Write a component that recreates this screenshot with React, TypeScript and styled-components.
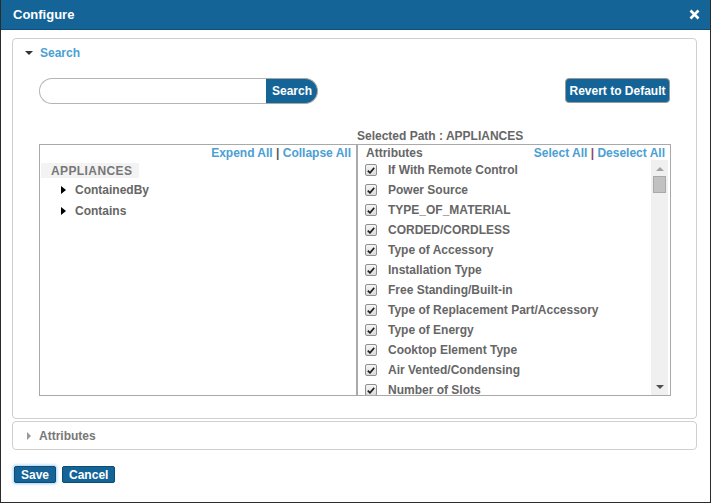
import React, { useState } from 'react';
import styled, { createGlobalStyle } from 'styled-components';

const GlobalStyle = createGlobalStyle`
  html, body {
    margin: 0;
    padding: 0;
    background: #fff;
  }
  body {
    font-family: 'Liberation Sans', Arial, sans-serif;
    font-size: 12px;
    color: #666;
  }
`;

const attributeNames = [
  'If With Remote Control',
  'Power Source',
  'TYPE_OF_MATERIAL',
  'CORDED/CORDLESS',
  'Type of Accessory',
  'Installation Type',
  'Free Standing/Built-in',
  'Type of Replacement Part/Accessory',
  'Type of Energy',
  'Cooktop Element Type',
  'Air Vented/Condensing',
  'Number of Slots',
];

const Dialog = styled.div`
  width: 711px;
  height: 503px;
  box-sizing: border-box;
  border: 1px solid #2b2b2b;
  border-top: none;
  display: flex;
  flex-direction: column;
  background: #fff;
`;

const TitleBar = styled.div`
  height: 30px;
  background: #156498;
  border-bottom: 1px solid #0f4f7a;
  box-sizing: border-box;
  display: flex;
  align-items: center;
  justify-content: space-between;
  padding: 0 10px 0 12px;
  color: #fff;
`;

const Title = styled.span`
  font-weight: bold;
  font-size: 13px;
`;

const CloseIcon = styled.svg`
  width: 11px;
  height: 11px;
  display: block;
`;

const Body = styled.div`
  flex: 1;
  padding: 8px 13px 0 11px;
  display: flex;
  flex-direction: column;
  gap: 2px;
`;

const Panel = styled.div<{ $height: number }>`
  height: ${(p) => p.$height}px;
  box-sizing: border-box;
  border: 1px solid #cfcfcf;
  border-radius: 4px;
  display: flex;
  flex-direction: column;
`;

const PanelHeader = styled.div<{ $open?: boolean }>`
  height: 27px;
  display: flex;
  align-items: center;
  gap: 7px;
  padding-left: 12px;
  font-weight: bold;
  font-size: 12px;
  color: ${(p) => (p.$open ? '#4aa0d3' : '#777')};
`;

const Caret = styled.span<{ $open?: boolean }>`
  width: 0;
  height: 0;
  ${(p) =>
    p.$open
      ? `border-left: 4px solid transparent;
         border-right: 4px solid transparent;
         border-top: 4px solid #333;`
      : `border-top: 4px solid transparent;
         border-bottom: 4px solid transparent;
         border-left: 4px solid #999;
         margin-left: 2px;
         margin-right: 1px;`}
`;

const PanelContent = styled.div`
  padding: 12px 26px 0 26px;
  display: flex;
  flex-direction: column;
`;

const SearchRow = styled.div`
  display: flex;
  justify-content: space-between;
  align-items: flex-start;
`;

const SearchGroup = styled.div`
  display: flex;
  height: 26px;
`;

const SearchInput = styled.input`
  width: 227px;
  height: 26px;
  box-sizing: border-box;
  border: 1px solid #b5b5b5;
  border-right: none;
  border-radius: 13px 0 0 13px;
  padding: 0 10px;
  outline: none;
  font-family: inherit;
`;

const SearchButton = styled.button`
  height: 26px;
  width: 52px;
  box-sizing: border-box;
  border: 1px solid #a8a8a8;
  border-left: none;
  border-radius: 0 13px 13px 0;
  background: #156498;
  color: #fff;
  font-family: inherit;
  font-weight: bold;
  font-size: 12px;
  text-align: left;
  padding: 0 0 0 6px;
`;

const RevertButton = styled.button`
  width: 105px;
  height: 25px;
  box-sizing: border-box;
  border: 1px solid #9a9a9a;
  border-radius: 4px;
  background: #156498;
  color: #fff;
  font-family: inherit;
  font-weight: bold;
  font-size: 12px;
  padding: 0;
`;

const PathRow = styled.div`
  margin-top: 24px;
  height: 16px;
  padding-left: 318px;
  font-weight: bold;
  color: #666;
  line-height: 16px;
`;

const TreeBox = styled.div`
  height: 252px;
  box-sizing: border-box;
  border: 1px solid #a9a9a9;
  display: flex;
  margin-right: -1px;
`;

const LeftPane = styled.div`
  width: 316px;
  border-right: 2px solid #a9a9a9;
  display: flex;
  flex-direction: column;
`;

const PaneTop = styled.div<{ $between?: boolean }>`
  height: 15px;
  display: flex;
  align-items: center;
  justify-content: ${(p) => (p.$between ? 'space-between' : 'flex-end')};
  font-weight: bold;
  font-size: 12px;
  padding: 0 5px 0 8px;
`;

const LinkText = styled.span`
  color: #4aa0d3;
`;

const Sep = styled.span<{ $color?: string }>`
  color: ${(p) => p.$color || '#555'};
`;

const RootNode = styled.div`
  margin: 3px 0 0 1px;
  width: 98px;
  height: 15px;
  background: #f3f3f3;
  display: flex;
  align-items: center;
  padding-left: 10px;
  box-sizing: border-box;
  font-weight: bold;
  color: #777;
  letter-spacing: 0.4px;
`;

const TreeList = styled.div`
  padding-top: 1px;
`;

const TreeItem = styled.div`
  height: 21px;
  display: flex;
  align-items: center;
  padding-left: 21px;
  gap: 9px;
  color: #666;
  font-size: 12px;
  font-weight: bold;
`;

const ItemArrow = styled.span`
  width: 0;
  height: 0;
  border-top: 4px solid transparent;
  border-bottom: 4px solid transparent;
  border-left: 5px solid #000;
`;

const RightPane = styled.div`
  flex: 1;
  display: flex;
  flex-direction: column;
  min-width: 0;
`;

const ListArea = styled.div`
  flex: 1;
  display: flex;
  overflow: hidden;
`;

const AttrList = styled.div`
  flex: 1;
  overflow: hidden;
`;

const AttrRow = styled.label`
  height: 20px;
  display: flex;
  align-items: center;
  padding-left: 7px;
  gap: 11px;
  font-weight: bold;
  color: #666;
  cursor: pointer;
`;

const Check = styled.span`
  width: 12px;
  height: 12px;
  box-sizing: border-box;
  border: 1px solid #8f8f8f;
  border-radius: 2px;
  background: linear-gradient(#f4f4f4, #dcdcdc);
  display: flex;
  align-items: center;
  justify-content: center;
`;

const ScrollTrack = styled.div`
  width: 17px;
  margin-right: 2px;
  background: #f0f0f0;
  display: flex;
  flex-direction: column;
  align-items: center;
`;

const ArrowUp = styled.span`
  margin-top: 7px;
  width: 0;
  height: 0;
  border-left: 4px solid transparent;
  border-right: 4px solid transparent;
  border-bottom: 4px solid #a3a3a3;
`;

const ArrowDown = styled.span`
  margin-bottom: 6px;
  width: 0;
  height: 0;
  border-left: 4px solid transparent;
  border-right: 4px solid transparent;
  border-top: 4px solid #505050;
`;

const Thumb = styled.span`
  margin-top: 5px;
  width: 13px;
  height: 17px;
  box-sizing: border-box;
  background: #c1c1c1;
  border: 1px solid #a8a8a8;
`;

const TrackFill = styled.span`
  flex: 1;
`;

const Footer = styled.div`
  padding: 14px 0 0 2px;
  display: flex;
  gap: 6px;
`;

const FooterButton = styled.button<{ $focus?: boolean }>`
  height: 17px;
  box-sizing: border-box;
  border: 1px solid #0e4b75;
  border-radius: 2px;
  background: #156498;
  color: #fff;
  font-family: inherit;
  font-weight: bold;
  font-size: 12px;
  padding: 0 6px;
  line-height: 14px;
  box-shadow: ${(p) => (p.$focus ? '0 0 3px 1px #9fd0f0' : 'none')};
`;

function CheckMark() {
  return (
    <svg width='8' height='7' viewBox='0 0 8 7'>
      <path d='M0.8 3.6 L3 5.8 L7.2 0.9' fill='none' stroke='#222' strokeWidth='1.7' />
    </svg>
  );
}

export default function App(): JSX.Element {
  const [query, setQuery] = useState('');

  return (
    <>
      <GlobalStyle />
      <Dialog>
        <TitleBar>
          <Title>Configure</Title>
          <CloseIcon viewBox='0 0 11 11'>
            <path d='M1.5 1.5 L9.5 9.5 M9.5 1.5 L1.5 9.5' stroke='#fff' strokeWidth='2.6' />
          </CloseIcon>
        </TitleBar>
        <Body>
          <Panel $height={381}>
            <PanelHeader $open>
              <Caret $open />
              Search
            </PanelHeader>
            <PanelContent>
              <SearchRow>
                <SearchGroup>
                  <SearchInput value={query} onChange={(e) => setQuery(e.target.value)} />
                  <SearchButton type='button'>Search</SearchButton>
                </SearchGroup>
                <RevertButton type='button'>Revert to Default</RevertButton>
              </SearchRow>
              <PathRow>Selected Path : APPLIANCES</PathRow>
              <TreeBox>
                <LeftPane>
                  <PaneTop>
                    <LinkText>Expend All</LinkText>
                    <Sep>&nbsp;|&nbsp;</Sep>
                    <LinkText>Collapse All</LinkText>
                  </PaneTop>
                  <RootNode>APPLIANCES</RootNode>
                  <TreeList>
                    <TreeItem>
                      <ItemArrow />
                      ContainedBy
                    </TreeItem>
                    <TreeItem>
                      <ItemArrow />
                      Contains
                    </TreeItem>
                  </TreeList>
                </LeftPane>
                <RightPane>
                  <PaneTop $between>
                    <span>Attributes</span>
                    <span>
                      <LinkText>Select All</LinkText>
                      <Sep $color='#8b4a6b'> | </Sep>
                      <LinkText>Deselect All</LinkText>
                    </span>
                  </PaneTop>
                  <ListArea>
                    <AttrList>
                      {attributeNames.map((name) => (
                        <AttrRow key={name}>
                          <Check>
                            <CheckMark />
                          </Check>
                          {name}
                        </AttrRow>
                      ))}
                    </AttrList>
                    <ScrollTrack>
                      <ArrowUp />
                      <Thumb />
                      <TrackFill />
                      <ArrowDown />
                    </ScrollTrack>
                  </ListArea>
                </RightPane>
              </TreeBox>
            </PanelContent>
          </Panel>
          <Panel $height={29}>
            <PanelHeader>
              <Caret />
              Attributes
            </PanelHeader>
          </Panel>
          <Footer>
            <FooterButton type='button' $focus>
              Save
            </FooterButton>
            <FooterButton type='button'>Cancel</FooterButton>
          </Footer>
        </Body>
      </Dialog>
    </>
  );
}
